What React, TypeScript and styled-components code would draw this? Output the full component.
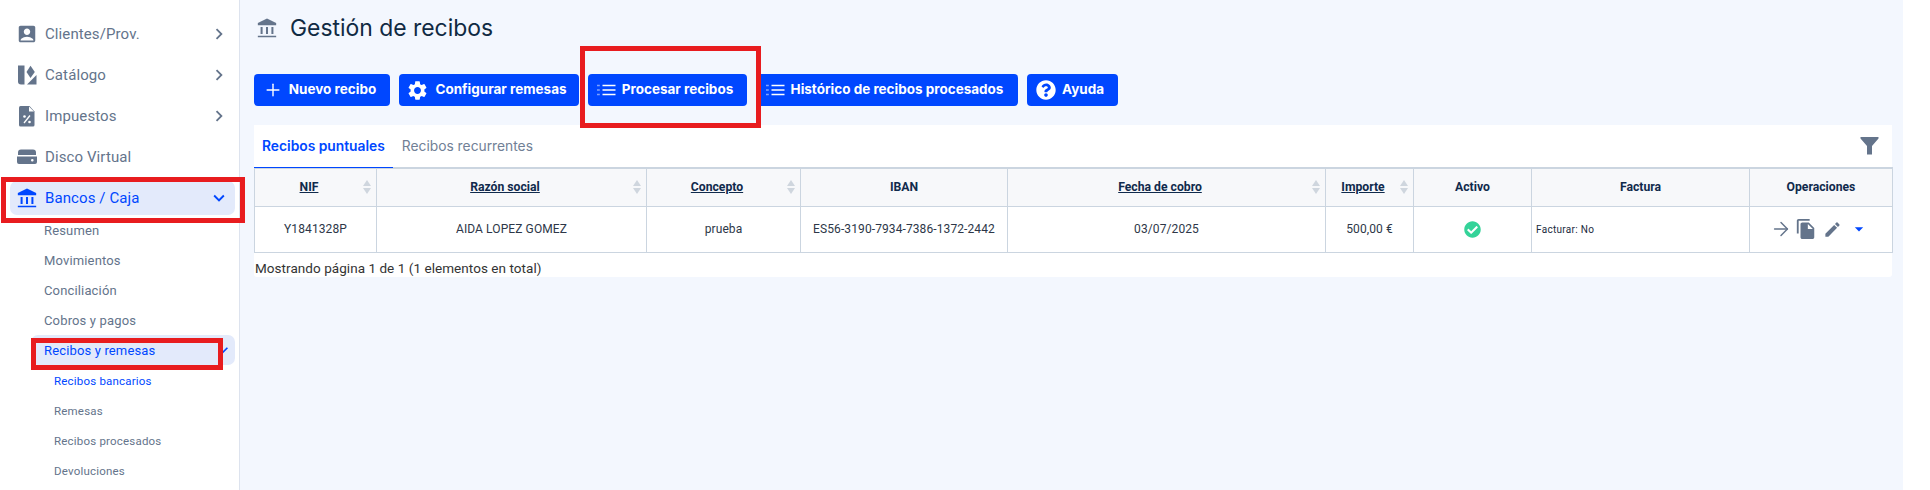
import React from "react";
import styled, { createGlobalStyle } from "styled-components";
import { MdAccountBox, MdEdit, MdFileCopy, MdKeyboardArrowDown, MdKeyboardArrowRight, MdSettings, MdArrowDropDown } from "react-icons/md";
import { FaQuestionCircle, FaCheckCircle } from "react-icons/fa";
import { ArrowRight, Plus } from "lucide-react";

const Global = createGlobalStyle`
  html, body { margin: 0; background: #fff; }
  * { box-sizing: border-box; }
`;
const Page = styled.div`
  position: relative; width: 1930px; height: 490px; overflow: hidden; display: flex;
  font-family: Roboto, "Liberation Sans", sans-serif; background: #fff;
`;
const Sidebar = styled.aside`
  width: 240px; flex: none; height: 490px; overflow: hidden; background: #fff;
  border-right: 1px solid #dde3ee; padding: 0 4px 0 10px; margin: 0;
`;
const NavList = styled.nav`
  display: flex; flex-direction: column; gap: 7px; margin-top: -24px;
`;
const NavItem = styled.div<{ $active?: boolean }>`
  height: 34px; display: flex; align-items: center; border-radius: 7px; padding: 0 5px 0 6px;
  background: ${p => (p.$active ? "#e3eafb" : "transparent")};
  color: ${p => (p.$active ? "#0047ff" : "#64748b")};
  font-size: 15px; letter-spacing: .1px;
`;
const NavIcon = styled.span`
  width: 22px; height: 22px; margin-right: 7px; display: flex; align-items: center; justify-content: center; flex: none;
  svg { display: block; }
`;
const NavLabel = styled.span`flex: 1;`;
const SubList = styled.div`
  display: flex; flex-direction: column; margin-top: 0;
`;
const SubItem = styled.div<{ $active?: boolean }>`
  height: 30px; display: flex; align-items: center; justify-content: space-between;
  margin-left: 21px; padding: 0 2px 0 13px; font-size: 13px; letter-spacing: .15px; border-radius: 7px;
  background: ${p => (p.$active ? "#e3eafb" : "transparent")};
  color: ${p => (p.$active ? "#0047ff" : "#64748b")};
`;
const LeafList = styled.div`
  display: flex; flex-direction: column; margin-top: 1px;
`;
const LeafItem = styled.div<{ $active?: boolean }>`
  height: 30px; display: flex; align-items: center; margin-left: 44px; font-size: 11.5px; letter-spacing: .2px;
  color: ${p => (p.$active ? "#0047ff" : "#64748b")};
`;
const Main = styled.main`
  width: 1663px; flex: none; background: #f3f7fe; padding: 0 11px 0 14px; height: 490px;
`;
const TitleRow = styled.header`
  height: 55px; display: flex; align-items: center; padding-left: 2px; gap: 12px; color: #64748b;
`;
const Title = styled.h1`
  margin: 0; font: 400 22.9px Inter, Roboto, sans-serif; color: #102a43;
`;
const Toolbar = styled.div`
  margin-top: 19px; display: flex; gap: 9px; height: 32px;
`;
const Button = styled.button<{ $w: number }>`
  width: ${p => p.$w}px; height: 32px; border: 0; border-radius: 4px; background: #0047ff; color: #fff;
  display: flex; align-items: center; justify-content: center; gap: 6px; padding: 0 5px 0 0;
  font: 700 13.5px Inter, Roboto, sans-serif; svg { flex: none; display: block; }
`;
const ButtonText = styled.span`
  margin-bottom: 2px;
`;
const Panel = styled.section`
  margin-top: 19px; background: #fff; height: 152px; border-radius: 0 0 3px 3px;
`;
const TabBar = styled.div`
  height: 42px; display: flex; align-items: stretch; position: relative;
`;
const Tab = styled.div<{ $active?: boolean }>`
  padding: 0 8px; display: flex; align-items: center; font: ${p => (p.$active ? 600 : 400)} 13.8px Inter, Roboto, sans-serif;
  color: ${p => (p.$active ? "#0047ff" : "#718096")};
  border-bottom: ${p => (p.$active ? "1px solid #0047ff" : "1px solid transparent")};
  margin-bottom: -1px; z-index: 1;
`;
const InactiveTab = styled(Tab)`
  margin-left: 1px;
`;
const FilterBox = styled.div`
  margin-left: auto; padding: 11px 13px 0 0; color: #64748b;
  svg { display: block; }
`;
const Table = styled.table`
  width: 1638px; border-collapse: collapse; table-layout: fixed;
  border-top: 2px solid #cbd5e0;
  th, td { border: 1px solid #cbd5e0; text-align: center; padding: 0; position: relative; }
  thead tr { height: 38px; }
  tbody tr { height: 46px; }
  th { background: #f7f8fa; font-size: 12.2px; font-weight: 700; color: #102a4c; }
  td { font-size: 12px; color: #2d3748; letter-spacing: .1px; }
`;
const SortHead = styled.th`
  && { padding-right: 13px; }
`;
const SortLabel = styled.span`text-decoration: underline;`;
const SortMark = styled.span`
  position: absolute; right: 5px; top: 11px; display: flex; flex-direction: column; gap: 2px;
  svg { display: block; }
`;
const FacturaCell = styled.td`
  && { text-align: left; padding-left: 4px; font-size: 10px; color: #1a2b40; letter-spacing: .3px; }
`;
const Ops = styled.div`
  display: flex; align-items: center; padding-left: 20px; color: #64748b;
`;
const CheckIcon = styled(FaCheckCircle)`
  display: block; margin: auto; color: #34d399;
`;
const CopyIcon = styled(MdFileCopy)`margin-left: 3px;`;
const EditIcon = styled(MdEdit)`margin-left: 6px;`;
const CaretIcon = styled(MdArrowDropDown)`margin-left: 7px; color: #0047ff;`;
const Footnote = styled.div`
  height: 31px; padding-left: 1px; display: flex; align-items: center; font-size: 13.5px; color: #333; letter-spacing: .05px;
`;
const Mark = styled.div<{ $x: number; $y: number; $w: number; $h: number }>`
  position: absolute; left: ${p => p.$x}px; top: ${p => p.$y}px; width: ${p => p.$w}px; height: ${p => p.$h}px;
  border: 5px solid #e81c1f; pointer-events: none;
`;

const Bank = ({ size = 22 }: { size?: number }) => (
  <svg width={size} height={size} viewBox="0 0 24 24" fill="currentColor">
    <path d="M12 1.500 2 6.500V9h20V6.500z" />
    <path d="M5 11h2.200v7.500H5zM10.900 11h2.200v7.500h-2.200zM16.800 11H19v7.500h-2.200zM2 20.500h20V22H2z" />
  </svg>
);
const ListIcon = () => (
  <svg width="19" height="14" viewBox="0 0 18 14" fill="none" stroke="#fff">
    <path d="M5 2.500h13M5 7h13M5 11.500h13" strokeWidth="1.500" />
    <path d="M0 2.500h2M0 7h2M0 11.500h2" strokeWidth="1.300" strokeDasharray="1 .6" />
  </svg>
);
const Catalog = () => (
  <svg width="22" height="22" viewBox="0 0 22 22" fill="currentColor">
    <path d="M2 1.500h6.500v19H5a3 3 0 0 1-3-3z" />
    <path d="M14.500 1.800 18.800 8l-4.300 6-4-6z" />
    <path d="M20.500 11v9.500h-9.500z" />
  </svg>
);
const Tax = () => (
  <svg width="20" height="22" viewBox="0 0 20 22">
    <path fill="currentColor" d="M3.500 1h9l5 5.500v13.500a1.500 1.500 0 0 1-1.500 1.500H3.500A1.500 1.500 0 0 1 2 20V2.500A1.500 1.500 0 0 1 3.500 1z" />
    <path fill="#fff" d="M12 1.500v5h5z" />
    <circle cx="7.500" cy="11.500" r="1.300" fill="#fff" />
    <circle cx="12.500" cy="17" r="1.300" fill="#fff" />
    <path d="M13 10.500 7 18" stroke="#fff" strokeWidth="1.300" />
  </svg>
);
const Drive = () => (
  <svg width="22" height="22" viewBox="0 0 22 22" fill="currentColor">
    <path d="M5 3.500h12a3 3 0 0 1 3 3V9H2V6.500a3 3 0 0 1 3-3z" />
    <path fillRule="evenodd" d="M1 10.500h20V16a2 2 0 0 1-2 2H3a2 2 0 0 1-2-2zM15 14.300a1.300 1.300 0 1 0 2.600 0 1.300 1.300 0 0 0-2.600 0z" />
  </svg>
);
const Funnel = () => (
  <svg width="19" height="19" viewBox="0 0 19 19" fill="currentColor">
    <path d="M.500 1h18v1.500L12 10v8.500H7V10L.500 2.500z" />
  </svg>
);
const Sort = () => (
  <SortMark>
    <svg width="8" height="6" viewBox="0 0 8 6" fill="#cfd6de"><path d="M4 0l4 6H0z" /></svg>
    <svg width="8" height="6" viewBox="0 0 8 6" fill="#cfd6de"><path d="M4 6L0 0h8z" /></svg>
  </SortMark>
);

const cols = [122, 270, 154, 207, 318, 88, 118, 218, 143];

export default function App() {
  return (
    <Page>
      <Global />
      <Sidebar>
        <NavList>
          <NavItem><NavIcon><Drive /></NavIcon></NavItem>
          <NavItem><NavIcon><MdAccountBox size={26} /></NavIcon><NavLabel>Clientes/Prov.</NavLabel><MdKeyboardArrowRight size={22} /></NavItem>
          <NavItem><NavIcon><Catalog /></NavIcon><NavLabel>Catálogo</NavLabel><MdKeyboardArrowRight size={22} /></NavItem>
          <NavItem><NavIcon><Tax /></NavIcon><NavLabel>Impuestos</NavLabel><MdKeyboardArrowRight size={22} /></NavItem>
          <NavItem><NavIcon><Drive /></NavIcon><NavLabel>Disco Virtual</NavLabel></NavItem>
          <NavItem $active><NavIcon><Bank /></NavIcon><NavLabel>Bancos / Caja</NavLabel><MdKeyboardArrowDown size={22} /></NavItem>
        </NavList>
        <SubList>
          <SubItem>Resumen</SubItem>
          <SubItem>Movimientos</SubItem>
          <SubItem>Conciliación</SubItem>
          <SubItem>Cobros y pagos</SubItem>
          <SubItem $active>Recibos y remesas<MdKeyboardArrowDown size={20} /></SubItem>
          <LeafList>
            <LeafItem $active>Recibos bancarios</LeafItem>
            <LeafItem>Remesas</LeafItem>
            <LeafItem>Recibos procesados</LeafItem>
            <LeafItem>Devoluciones</LeafItem>
          </LeafList>
        </SubList>
      </Sidebar>
      <Main>
        <TitleRow><Bank size={22} /><Title>Gestión de recibos</Title></TitleRow>
        <Toolbar>
          <Button $w={136}><Plus size={20} strokeWidth={1.7} /><ButtonText>Nuevo recibo</ButtonText></Button>
          <Button $w={180}><MdSettings size={23} /><ButtonText>Configurar remesas</ButtonText></Button>
          <Button $w={159}><ListIcon /><ButtonText>Procesar recibos</ButtonText></Button>
          <Button $w={262}><ListIcon /><ButtonText>Histórico de recibos procesados</ButtonText></Button>
          <Button $w={91}><FaQuestionCircle size={20} /><ButtonText>Ayuda</ButtonText></Button>
        </Toolbar>
        <Panel>
          <TabBar>
            <Tab $active>Recibos puntuales</Tab>
            <InactiveTab>Recibos recurrentes</InactiveTab>
            <FilterBox><Funnel /></FilterBox>
          </TabBar>
          <Table>
            <colgroup>{cols.map((w, i) => <col key={i} width={w} />)}</colgroup>
            <thead>
              <tr>
                <SortHead><SortLabel>NIF</SortLabel><Sort /></SortHead>
                <SortHead><SortLabel>Razón social</SortLabel><Sort /></SortHead>
                <SortHead><SortLabel>Concepto</SortLabel><Sort /></SortHead>
                <th>IBAN</th>
                <SortHead><SortLabel>Fecha de cobro</SortLabel><Sort /></SortHead>
                <SortHead><SortLabel>Importe</SortLabel><Sort /></SortHead>
                <th>Activo</th>
                <th>Factura</th>
                <th>Operaciones</th>
              </tr>
            </thead>
            <tbody>
              <tr>
                <td>Y1841328P</td>
                <td>AIDA LOPEZ GOMEZ</td>
                <td>prueba</td>
                <td>ES56-3190-7934-7386-1372-2442</td>
                <td>03/07/2025</td>
                <td>500,00 €</td>
                <td><CheckIcon size={17} /></td>
                <FacturaCell>Facturar: No</FacturaCell>
                <td>
                  <Ops>
                    <ArrowRight size={22} strokeWidth={1.6} />
                    <CopyIcon size={22} />
                    <EditIcon size={19} />
                    <CaretIcon size={20} />
                  </Ops>
                </td>
              </tr>
            </tbody>
          </Table>
          <Footnote>Mostrando página 1 de 1 (1 elementos en total)</Footnote>
        </Panel>
      </Main>
      <Mark $x={1} $y={177} $w={244} $h={46} />
      <Mark $x={31} $y={338} $w={192} $h={32} />
      <Mark $x={580} $y={46} $w={181} $h={82} />
    </Page>
  );
}
